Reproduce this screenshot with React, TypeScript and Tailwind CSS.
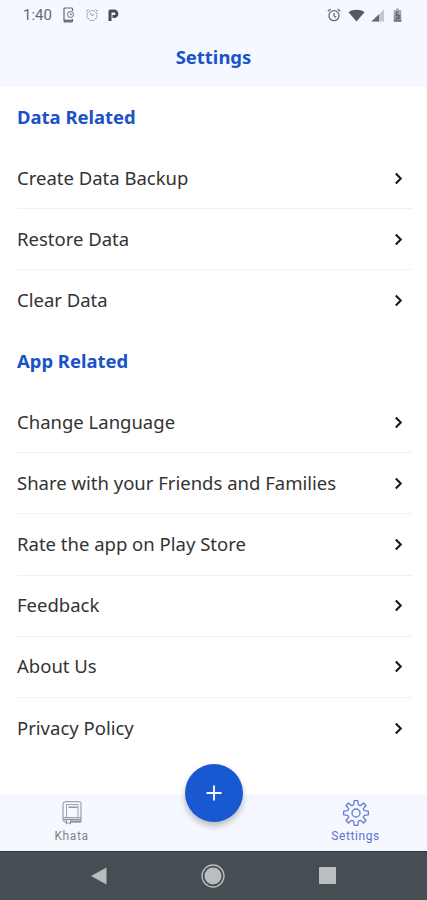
import type { ReactNode } from "react"

const dataItems = ["Create Data Backup", "Restore Data", "Clear Data"]

const appItems = [
  "Change Language",
  "Share with your Friends and Families",
  "Rate the app on Play Store",
  "Feedback",
  "About Us",
  "Privacy Policy",
]

function StatusBar() {
  return (
    <div className="flex h-[30px] items-center justify-between pl-[23px] pr-6 text-[#66696d]">
      <div className="flex items-center">
        <span className="w-[39px] font-[Roboto] text-[15px] leading-none">1:40</span>
        <svg className="mr-[9px]" width="14" height="16" viewBox="0 0 14 16" fill="none" stroke="currentColor">
          <path d="M10.500 4V2a1 1 0 0 0-1-1H3a1 1 0 0 0-1 1v12a1 1 0 0 0 1 1h6.500a1 1 0 0 0 1-1v-2" strokeWidth="1.200" />
          <path d="M2 13.700h8.500" strokeWidth="2" />
          <circle cx="8.500" cy="7.500" r="3" />
          <path d="M8.500 6v1.700h1.500" strokeWidth=".8" />
        </svg>
        <svg className="mr-[9px]" width="14" height="14" viewBox="0 0 14 14" fill="none" stroke="currentColor">
          <circle cx="7" cy="7.500" r="5" strokeDasharray="2 .7" opacity=".75" />
          <path d="M1 3.500 3.500 1.500M10.500 1.500 13 3.500M5 5l2 2.500 2-1" opacity=".75" />
        </svg>
        <svg width="11" height="14" viewBox="0 0 11 14" fill="none" stroke="#484b4f" strokeWidth="3">
          <path d="M2 13V3h4.200a2.600 2.600 0 0 1 0 5.500H4.500" strokeLinejoin="round" />
        </svg>
      </div>
      <div className="flex items-center">
        <svg className="mr-[7px]" width="14" height="14" viewBox="0 0 14 14" fill="none" stroke="currentColor" strokeWidth="1.300">
          <circle cx="7" cy="7.700" r="5" />
          <path d="M.8 3.300 3.500 1M10.500 1l2.700 2.300M7 5v3l2.200 1.400" />
        </svg>
        <svg className="mr-1.5" width="17" height="13" viewBox="0 0 17 13" fill="#56595d">
          <path d="M.5 3.200C5 0 12 0 16.500 3.200L8.500 12.500Z" />
        </svg>
        <svg className="mr-[8px]" width="14" height="13" viewBox="0 0 14 13" fill="currentColor">
          <path d="M13 .5v12H.5Z" opacity=".35" />
          <path d="M8 5.300v7.200H.5Z" />
        </svg>
        <svg className="mr-px" width="9" height="14" viewBox="0 0 9 14">
          <path d="M3 .5h3V2h2.300v5H.7V2H3Z" fill="#aaadb0" />
          <path d="M.7 6.500h7.600v7H.7Z" fill="#909498" />
          <path d="M5.700 4H3.500v3h2.300v3.300H3M.7 13h7.600" stroke="#55595d" strokeWidth="1.200" fill="none" />
        </svg>
      </div>
    </div>
  )
}

function Section({ title, items }: { title: string; items: string[] }) {
  return (
    <section>
      <h2 className="flex h-[61px] items-center pb-0.5 text-[18.45px] font-bold text-[#1a52c8]">{title}</h2>
      <ul className="divide-y divide-[#f2f2f2]">
        {items.map((item) => (
          <li key={item} className="flex h-[61.1px] items-center justify-between pr-[9px]">
            <span className="pb-px text-[18.5px] text-[#333333]">{item}</span>
            <svg width="9" height="13" viewBox="0 0 9 13" fill="none" stroke="#151515" strokeWidth="2">
              <path d="m1.800 1.500 5 5-5 5" />
            </svg>
          </li>
        ))}
      </ul>
    </section>
  )
}

function BookIcon() {
  return (
    <svg width="20" height="24" viewBox="0 0 20 24" fill="none" stroke="#8b8e92">
      <path d="M4 .7h13.500a1.500 1.500 0 0 1 1.500 1.500V21H3a2.200 2.200 0 0 1-2-2.500V3.500A2.800 2.800 0 0 1 4 .7Z" />
      <path d="M4.500 3.500v13M1 18a2 2 0 0 1 2-1.500h16M4.500 3.500H16v13" strokeWidth=".8" />
      <path d="M6.500 6.200h9" strokeWidth="1.400" />
      <path d="M2 18.500h17M9 20.500h10" strokeWidth="1.500" />
      <path d="M4.500 18.500V23l2-1.500 2 1.500v-4.500Z" fill="#f5f9ff" />
    </svg>
  )
}

function GearIcon() {
  return (
    <svg width="26" height="26" viewBox="-13 -13 26 26" fill="none" stroke="#647bd4" strokeWidth="1.300" strokeLinejoin="round">
      <path d="M-1.800-12.300H1.800L2.300-8.500Q4-6.800 5-7.700L7.500-10 10-7.500 7.700-5Q6.800-4 8.500-2.300L12.300-1.800V1.800L8.500 2.300Q6.800 4 7.700 5L10 7.500 7.500 10 5 7.700Q4 6.800 2.300 8.500L1.800 12.300H-1.800L-2.300 8.500Q-4 6.800-5 7.700L-7.500 10-10 7.500-7.700 5Q-6.800 4-8.500 2.300L-12.300 1.800V-1.800L-8.500-2.300Q-6.800-4-7.700-5L-10-7.500-7.500-10-5-7.700Q-4-6.800-2.300-8.500Z" />
      <circle r="4" />
    </svg>
  )
}

function TabItem({ icon, label, className }: { icon: ReactNode; label: string; className: string }) {
  return (
    <div className={`flex w-[143px] flex-col items-center ${className}`}>
      <div className="flex h-[26px] items-center">{icon}</div>
      <span className="mt-[3px] font-[Roboto] text-[12px] leading-[14px] tracking-[0.6px]">{label}</span>
    </div>
  )
}

export default function App() {
  return (
    <div className="flex h-[900px] w-[427px] flex-col overflow-hidden bg-white font-['Noto_Sans',sans-serif]">
      <header className="h-[87px] bg-[#f5f9ff]">
        <StatusBar />
        <h1 className="flex h-[55px] items-center justify-center pb-0.5 text-[18.45px] font-bold text-[#1a52c8]">Settings</h1>
      </header>

      <main className="flex-1 pl-[17px] pr-[15px]">
        <Section title="Data Related" items={dataItems} />
        <Section title="App Related" items={appItems} />
      </main>

      <nav className="relative flex h-[57px] justify-between bg-[#f5f9ff] pt-1.5">
        <TabItem icon={<BookIcon />} label="Khata" className="text-[#808286]" />
        <TabItem icon={<GearIcon />} label="Settings" className="text-[#5a73d2]" />
        <button className="absolute -top-[30px] left-[185px] flex size-[58px] items-center justify-center rounded-full bg-[#1859d1] shadow-[0_4px_6px_rgba(0,0,0,0.25)]">
          <svg width="16" height="16" viewBox="0 0 16 16" stroke="white" strokeWidth="1.800">
            <path d="M8 .5v15M.5 8h15" />
          </svg>
        </button>
      </nav>

      <div className="flex h-[49px] items-center justify-between border-t border-[#30363a] bg-[#474e53] pb-px pl-[90px] pr-[91px]">
        <svg width="17" height="18" viewBox="0 0 17 18" fill="#b9bfbf">
          <path d="M1 9 16.500.5v17Z" />
        </svg>
        <svg width="24" height="24" viewBox="0 0 24 24" fill="#b9bfbf">
          <circle cx="12" cy="12" r="8.500" />
          <circle cx="12" cy="12" r="11" fill="none" stroke="#b9bfbf" strokeWidth="1.300" />
        </svg>
        <div className="size-[17px] rounded-[1px] bg-[#b9bfbf]" />
      </div>
    </div>
  )
}
